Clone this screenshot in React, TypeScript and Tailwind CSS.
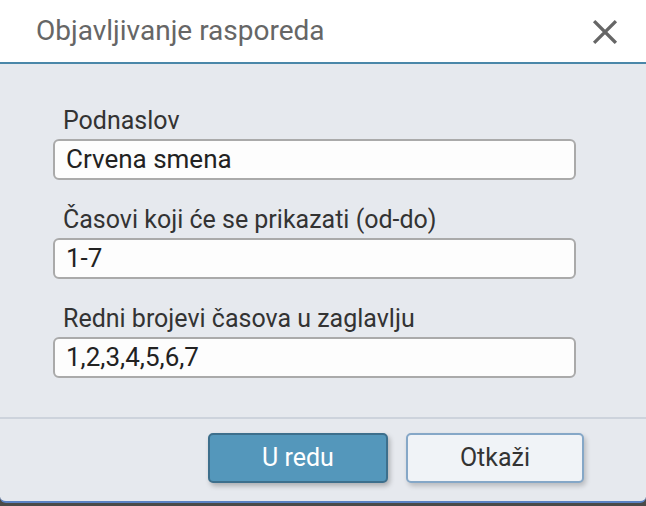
import React from "react";

const fields = [
  { label: "Podnaslov", value: "Crvena smena" },
  { label: "Časovi koji će se prikazati (od-do)", value: "1-7" },
  { label: "Redni brojevi časova u zaglavlju", value: "1,2,3,4,5,6,7" },
];

export default function App() {
  return (
    <div
      className="h-[506px] w-[646px] overflow-hidden bg-[#4a4a48]"
      style={{ fontFamily: "Roboto, 'Noto Sans', sans-serif" }}
    >
      <div className="flex h-[503px] flex-col overflow-hidden rounded-b-[6px] border-b-[2px] border-[#5b82c4] bg-[#e6e9ee]">
        {/* header */}
        <div className="flex h-[64px] shrink-0 items-center justify-between border-b-[2px] border-[#4a87a9] bg-white pl-[36px] pr-[28px]">
          <span className="text-[28px] leading-none text-[#666666]">
            Objavljivanje rasporeda
          </span>
          <svg width="26" height="26" viewBox="0 0 24 24" className="mt-[1px]">
            <path
              d="M3 3 L21 21 M21 3 L3 21"
              stroke="#666666"
              strokeWidth="3"
              strokeLinecap="square"
            />
          </svg>
        </div>

        {/* body */}
        <div className="flex flex-col gap-[22px] border-b-[2px] border-[#cdd3dc] pb-[39px] pl-[53px] pr-[70px] pt-[39px]">
          {fields.map((f) => (
            <div key={f.label} className="flex flex-col">
              <label className="pl-[10px] text-[25px] leading-[36px] text-[#333333]">
                {f.label}
              </label>
              <div className="flex h-[41px] items-center rounded-[6px] border-[2px] border-[#aaaaaa] bg-[#fdfdfd] pl-[11px] text-[26px] text-[#222222]">
                {f.value}
              </div>
            </div>
          ))}
        </div>

        {/* footer */}
        <div className="flex justify-end gap-[18px] pr-[62px] pt-[14px]">
          <button className="flex h-[50px] w-[180px] items-center justify-center rounded-[5px] border-[2px] border-[#3d6f8c] bg-[#5497bb] text-[25px] text-white shadow-[2px_3px_5px_rgba(0,0,0,0.25)]">
            U redu
          </button>
          <button className="flex h-[50px] w-[178px] items-center justify-center rounded-[5px] border-[2px] border-[#85a7c7] bg-[#f0f3f7] text-[25px] text-[#333333] shadow-[2px_3px_5px_rgba(0,0,0,0.2)]">
            Otkaži
          </button>
        </div>
      </div>
    </div>
  );
}
